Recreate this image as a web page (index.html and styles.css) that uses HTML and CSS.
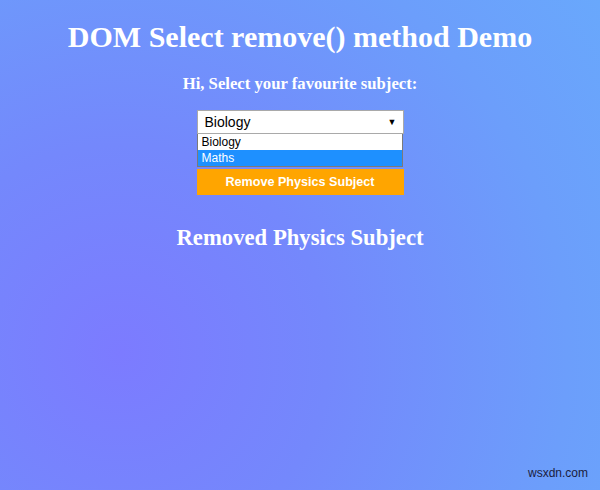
FILE: index.html
```html
<!DOCTYPE html>
<html>
<head>
<meta charset="utf-8">
<link rel="stylesheet" href="styles.css">
</head>
<body>
<main class="page">
  <h1 class="title">DOM Select remove() method Demo</h1>
  <p class="prompt">Hi, Select your favourite subject:</p>
  <div class="form">
    <div class="select">
      <span class="select-value">Biology</span>
      <span class="select-arrow">&#9660;</span>
    </div>
    <ul class="options">
      <li class="option">Biology</li>
      <li class="option selected">Maths</li>
    </ul>
    <button class="btn">Remove Physics Subject</button>
  </div>
  <h2 class="result">Removed Physics Subject</h2>
</main>
<div class="watermark">wsxdn.com</div>
</body>
</html>
```

FILE: styles.css
```css
html, body {
  margin: 0;
  padding: 0;
  width: 600px;
  height: 490px;
  overflow: hidden;
}
body {
  background: radial-gradient(circle at 20% 72%, #7c7bff 0%, #7488fc 35%, #6c9efb 75%, #69a8fc 100%);
  font-family: "Liberation Serif", "Times New Roman", serif;
  color: #fff;
  position: relative;
}
.page {
  display: flex;
  flex-direction: column;
  align-items: center;
  padding-top: 19px;
}
.title {
  margin: 0;
  font-size: 30px;
  font-weight: bold;
  line-height: 36px;
}
.prompt {
  margin: 19px 0 0;
  font-size: 16.7px;
  font-weight: bold;
  line-height: 20px;
}
.form {
  margin-top: 16px;
  width: 207px;
  display: flex;
  flex-direction: column;
  font-family: "Liberation Sans", Arial, sans-serif;
}
.select {
  height: 24px;
  box-sizing: border-box;
  background: #fff;
  border: 1px solid #a9a9a9;
  display: flex;
  align-items: center;
  justify-content: space-between;
  padding: 0 6px 0 7px;
  color: #000;
  font-size: 14px;
}
.select-arrow {
  font-size: 9px;
}
.options {
  list-style: none;
  margin: 0;
  padding: 0;
  width: 206px;
  background: #fff;
  border: 1px solid #7a7a7a;
  border-top: 0;
  box-sizing: border-box;
}
.option {
  height: 16px;
  line-height: 16px;
  padding: 0 4px;
  font-size: 12px;
  color: #000;
}
.option.selected {
  background: #1e90ff;
  color: #fff;
}
.btn {
  margin-top: 2px;
  height: 26px;
  border: 0;
  background: #ffa500;
  color: #fff;
  font-family: "Liberation Sans", Arial, sans-serif;
  font-weight: bold;
  font-size: 12.6px;
  padding: 0;
}
.result {
  margin: 30px 0 0;
  font-size: 22.7px;
  font-weight: bold;
  line-height: 26px;
}
.watermark {
  position: absolute;
  right: 12px;
  bottom: 10px;
  font-family: "Liberation Sans", Arial, sans-serif;
  font-size: 12px;
  color: #1a2040;
}
```
